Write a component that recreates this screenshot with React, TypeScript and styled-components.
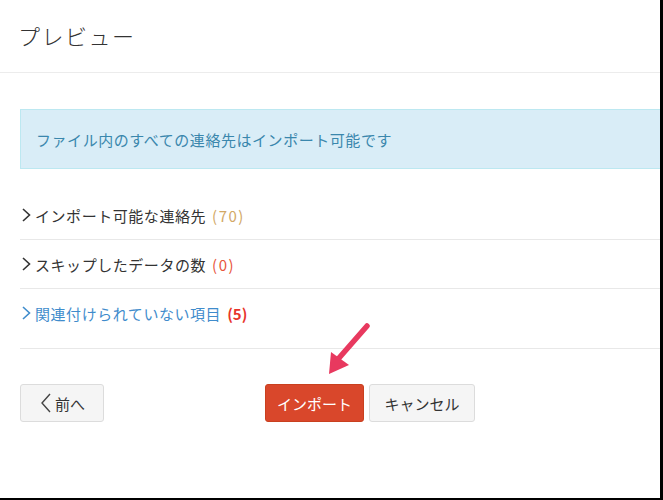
import styled, { createGlobalStyle } from 'styled-components';

const GlobalStyle = createGlobalStyle`
  body {
    margin: 0;
    background: #ffffff;
    font-family: 'Noto Sans CJK JP', 'Noto Sans', sans-serif;
  }
`;

const Page = styled.div`
  position: relative;
  width: 660px;
  height: 498px;
  border-right: 3px solid #000;
  border-bottom: 2px solid #000;
  overflow: hidden;
  background: #fff;
`;

const Header = styled.div`
  height: 73px;
  display: flex;
  align-items: center;
  padding-left: 18px;
  border-bottom: 1px solid #ececec;
  padding-bottom: 2px;
  box-sizing: border-box;
`;

const Title = styled.div`
  font-size: 22px;
  font-weight: 300;
  color: #333;
  letter-spacing: 1.5px;
`;

const Content = styled.div`
  padding-left: 20px;
`;

const Alert = styled.div`
  margin-top: 36px;
  height: 60px;
  box-sizing: border-box;
  display: flex;
  align-items: center;
  padding-left: 15px;
  background: #d9edf7;
  border: 1px solid #bce8f1;
  border-right: none;
  color: #3a87ad;
  font-size: 15px;
  letter-spacing: 0.55px;
`;

const List = styled.div`
  margin-top: 22px;
`;

const Row = styled.div<{ $tall?: boolean }>`
  height: 48px;
  display: flex;
  align-items: center;
  border-bottom: 1px solid #e8e8e8;
  padding-bottom: ${(p) => (p.$tall ? '11px' : '0')};
  font-size: 15px;
  letter-spacing: 0.55px;
`;

const RowLabel = styled.span<{ $link?: boolean }>`
  display: flex;
  align-items: center;
  gap: 3px;
  color: ${(p) => (p.$link ? '#3f8ccc' : '#333')};
`;

const Count = styled.span<{ $color: string; $bold?: boolean }>`
  margin-left: 3px;
  color: ${(p) => p.$color};
  font-weight: ${(p) => (p.$bold ? 600 : 400)};
  letter-spacing: ${(p) => (p.$bold ? '0' : '1.5px')};
`;

const Actions = styled.div`
  margin-top: 35px;
  display: flex;
  align-items: center;
`;

const Button = styled.button<{ $primary?: boolean; $width: number }>`
  height: 38px;
  width: ${(p) => p.$width}px;
  box-sizing: border-box;
  border-radius: 3px;
  border: 1px solid ${(p) => (p.$primary ? '#c9401f' : '#dcdcdc')};
  background: ${(p) => (p.$primary ? '#d9472b' : '#f5f5f5')};
  color: ${(p) => (p.$primary ? '#fff' : '#333')};
  font-family: 'Noto Sans CJK JP', 'Noto Sans', sans-serif;
  font-size: 15px;
  display: flex;
  align-items: center;
  justify-content: center;
  gap: 2px;
  padding: 0;
  cursor: pointer;
`;

const Group = styled.div`
  margin-left: 161px;
  display: flex;
  gap: 5px;
`;

const Pointer = styled.svg`
  position: absolute;
  left: 320px;
  top: 320px;
`;

const Chevron = ({ color }: { color: string }) => (
  <svg width="12" height="16" viewBox="0 0 12 16">
    <polyline points="3,2 9.5,8 3,14" fill="none" stroke={color} strokeWidth="1.6" />
  </svg>
);

const App = () => (
  <Page>
    <GlobalStyle />
    <Header>
      <Title>プレビュー</Title>
    </Header>
    <Content>
      <Alert>ファイル内のすべての連絡先はインポート可能です</Alert>
      <List>
        <Row>
          <RowLabel>
            <Chevron color="#333" />
            インポート可能な連絡先
            <Count $color="#d2a865">(70)</Count>
          </RowLabel>
        </Row>
        <Row>
          <RowLabel>
            <Chevron color="#333" />
            スキップしたデータの数
            <Count $color="#e8553c">(0)</Count>
          </RowLabel>
        </Row>
        <Row $tall>
          <RowLabel $link>
            <Chevron color="#3f8ccc" />
            関連付けられていない項目
            <Count $color="#e8352b" $bold>(5)</Count>
          </RowLabel>
        </Row>
      </List>
      <Actions>
        <Button $width={84}>
          <svg width="14" height="22" viewBox="0 0 14 22">
            <polyline points="11,2 3,11 11,20" fill="none" stroke="#444" strokeWidth="1.4" />
          </svg>
          前へ
        </Button>
        <Group>
          <Button $primary $width={99}>インポート</Button>
          <Button $width={106}>キャンセル</Button>
        </Group>
      </Actions>
    </Content>
    <Pointer width="60" height="60" viewBox="0 0 60 60">
      <path d="M47 6 L19 38" stroke="#e8395f" strokeWidth="5.5" strokeLinecap="round" />
      <polygon points="9,54 11,32 29,45" fill="#e8395f" />
    </Pointer>
  </Page>
);

export default App;
